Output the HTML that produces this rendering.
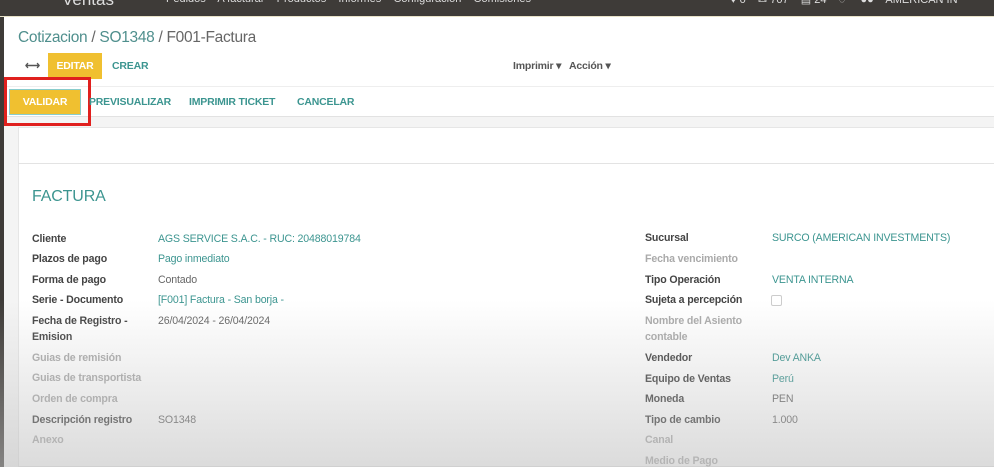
<!DOCTYPE html>
<html><head><meta charset="utf-8"><style>
*{margin:0;padding:0;box-sizing:border-box}
body{width:994px;height:467px;overflow:hidden;background:#f4f4f4;font-family:"Liberation Sans",sans-serif;position:relative}
.nav{position:absolute;left:0;top:0;width:994px;height:17px;background:#3e3b38;border-bottom:1px solid #e8e2c8;color:#ddd;font-size:11px}
.nav span{position:absolute;top:-7px}
.cp{position:absolute;left:4px;top:17px;width:990px;height:100px;background:#fff;border-bottom:1px solid #e2e2e2}
.leftbar{position:absolute;left:0;top:17px;width:4px;height:450px;background:#3e3b38}
.bc{position:absolute;left:18px;top:29px;font-size:15.5px;color:#666;letter-spacing:-0.3px}
.bc a{color:#4f8f8d}
.btn{position:absolute;font-size:10.5px;font-weight:bold;color:#3c9590;letter-spacing:-0.2px}
.y{background:#f0c030;color:#fff;text-align:center}
.sep{position:absolute;left:4px;top:86px;width:990px;height:1px;background:#eee}
.sheet{position:absolute;left:18px;top:127px;width:976px;height:340px;background:#fff;border:1px solid #e6e6e6;border-right:none}
.hline{position:absolute;left:18px;top:163px;width:976px;height:1px;background:#e3e3e3}
.f{position:absolute;font-size:10.6px;white-space:nowrap;letter-spacing:-0.15px}
.l{font-weight:bold;color:#444}
.g{color:#aaa;font-weight:bold}
.v{color:#3c9590}
.d{color:#666}
.shade{position:absolute;left:0;top:300px;width:994px;height:167px;background:linear-gradient(rgba(200,200,200,0),rgba(190,190,190,.55))}
</style></head><body>
<div class="nav"><span style="left:20px">▪▪▪</span><span style="left:62px;font-size:17px;top:-10px">Ventas</span><span style="left:166px">Pedidos &nbsp;&nbsp; A facturar &nbsp;&nbsp; Productos &nbsp;&nbsp; Informes &nbsp;&nbsp; Configuración &nbsp;&nbsp; Comisiones</span><span style="left:730px">♥ 0 &nbsp;&nbsp; ✉ 707 &nbsp;&nbsp; ▤ 24 &nbsp;&nbsp; ◌ &nbsp;&nbsp;&nbsp; ●● &nbsp;&nbsp; AMERICAN IN</span></div>
<div class="leftbar"></div>
<div class="cp"></div>
<div class="bc"><a>Cotizacion</a> / <a>SO1348</a> / F001-Factura</div>
<div class="btn" style="left:25px;top:60px;color:#555">⟷</div>
<div class="btn y" style="left:48px;top:53px;width:54px;height:26px;line-height:26px">EDITAR</div>
<div class="btn" style="left:112px;top:60px">CREAR</div>
<div class="btn" style="left:513px;top:60px;color:#555">Imprimir ▾ &nbsp; Acción ▾</div>
<div class="sep"></div>
<div class="btn y" style="left:10px;top:90px;width:70px;height:24px;line-height:24px;box-shadow:0 0 0 1px #8cc">VALIDAR</div>
<div style="position:absolute;left:4px;top:77px;width:87px;height:49px;border:3px solid #e0201e"></div>
<div class="btn" style="left:89px;top:96px">PREVISUALIZAR</div>
<div class="btn" style="left:189px;top:96px">IMPRIMIR TICKET</div>
<div class="btn" style="left:297px;top:96px">CANCELAR</div>
<div class="sheet"></div>
<div class="hline"></div>
<div class="f" style="left:32px;top:188px;font-size:16px;color:#3c9590">FACTURA</div>
<div class="f l" style="left:32px;top:233px">Cliente</div><div class="f v" style="left:158px;top:233px">AGS SERVICE S.A.C. - RUC: 20488019784</div>
<div class="f l" style="left:32px;top:253px">Plazos de pago</div><div class="f v" style="left:158px;top:253px">Pago inmediato</div>
<div class="f l" style="left:32px;top:274px">Forma de pago</div><div class="f d" style="left:158px;top:274px">Contado</div>
<div class="f l" style="left:32px;top:294px">Serie - Documento</div><div class="f v" style="left:158px;top:294px">[F001] Factura - San borja -</div>
<div class="f l" style="left:32px;top:315px">Fecha de Registro -</div><div class="f d" style="left:158px;top:315px">26/04/2024 - 26/04/2024</div>
<div class="f l" style="left:32px;top:331px">Emision</div>
<div class="f g" style="left:32px;top:352px">Guias de remisión</div>
<div class="f g" style="left:32px;top:372px">Guias de transportista</div>
<div class="f g" style="left:32px;top:393px">Orden de compra</div>
<div class="f l" style="left:32px;top:414px">Descripción registro</div><div class="f d" style="left:158px;top:414px">SO1348</div>
<div class="f g" style="left:32px;top:434px">Anexo</div>
<div class="f l" style="left:645px;top:232px">Sucursal</div><div class="f v" style="left:772px;top:232px">SURCO (AMERICAN INVESTMENTS)</div>
<div class="f g" style="left:645px;top:253px">Fecha vencimiento</div>
<div class="f l" style="left:645px;top:274px">Tipo Operación</div><div class="f v" style="left:772px;top:274px">VENTA INTERNA</div>
<div class="f l" style="left:645px;top:294px">Sujeta a percepción</div><div style="position:absolute;left:771px;top:295px;width:11px;height:11px;border:1px solid #ccc;border-radius:2px"></div>
<div class="f g" style="left:645px;top:315px">Nombre del Asiento</div>
<div class="f g" style="left:645px;top:331px">contable</div>
<div class="f l" style="left:645px;top:352px">Vendedor</div><div class="f v" style="left:772px;top:352px">Dev ANKA</div>
<div class="f l" style="left:645px;top:373px">Equipo de Ventas</div><div class="f v" style="left:772px;top:373px">Perú</div>
<div class="f l" style="left:645px;top:393px">Moneda</div><div class="f d" style="left:772px;top:393px">PEN</div>
<div class="f l" style="left:645px;top:414px">Tipo de cambio</div><div class="f d" style="left:772px;top:414px">1.000</div>
<div class="f g" style="left:645px;top:434px">Canal</div>
<div class="f g" style="left:645px;top:455px">Medio de Pago</div>
<div class="shade"></div>
</body></html>
